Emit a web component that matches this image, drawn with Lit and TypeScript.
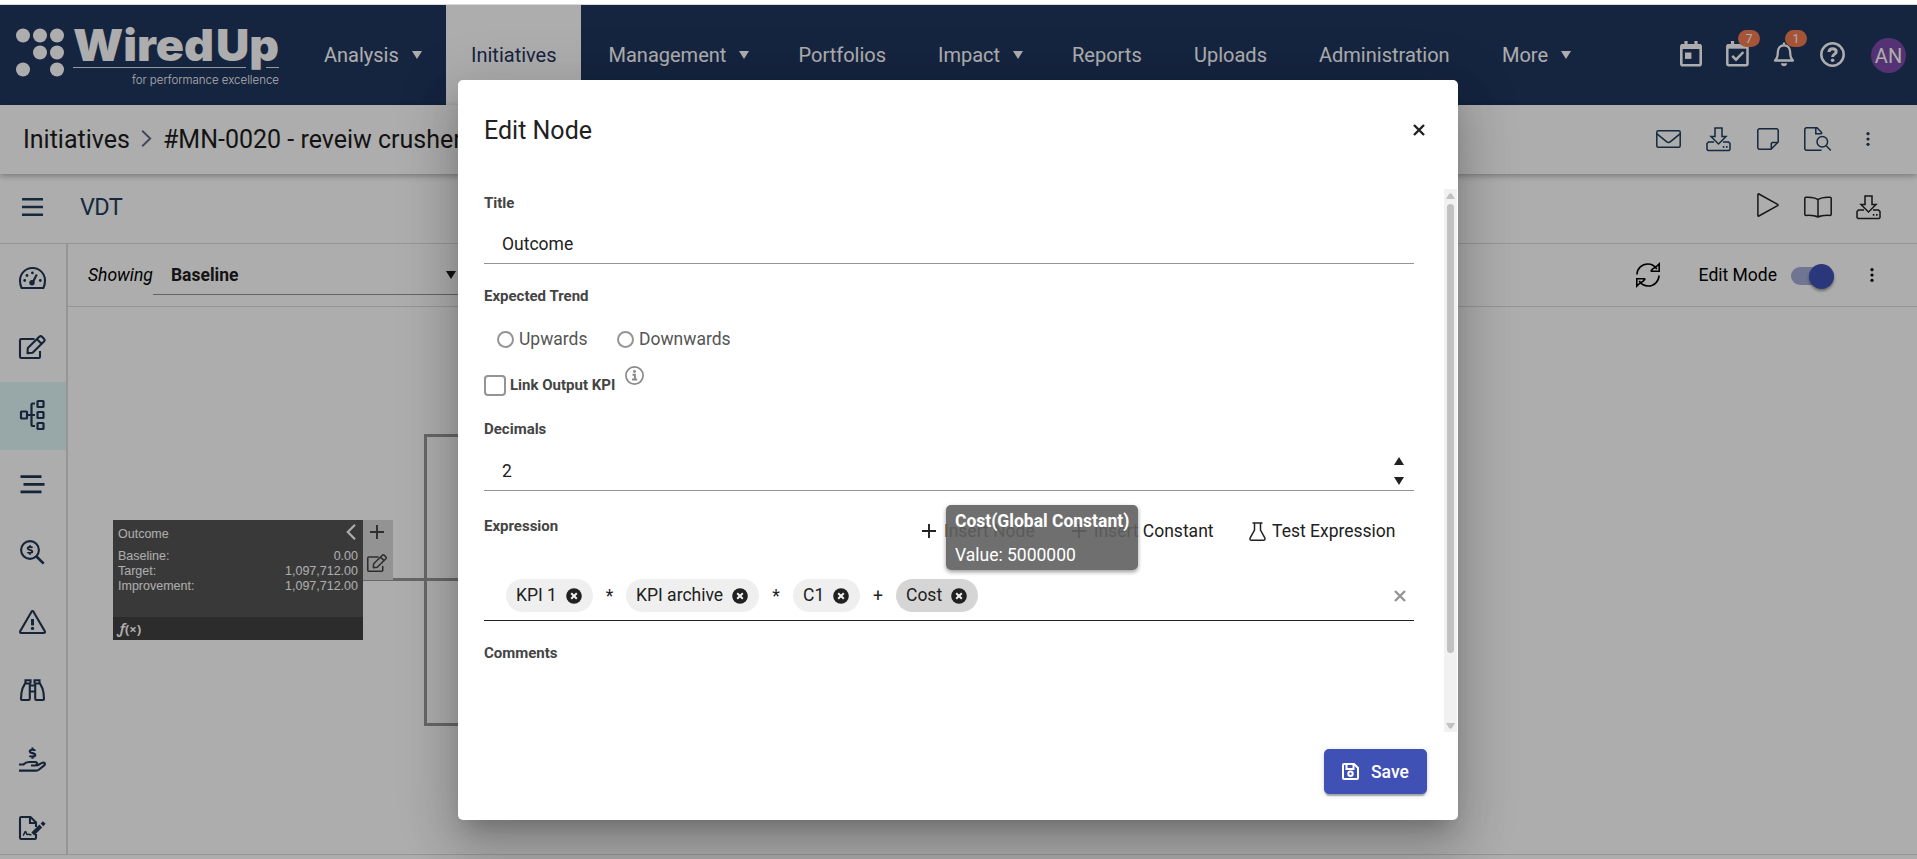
import { LitElement, html, css, svg } from "lit";
import { customElement, property } from "lit/decorators.js";

type Glyph = { w: number; h: number; s?: number; body: unknown };

const dollar = (x: number, y: number, k: number) =>
  svg`<g transform="translate(${x} ${y}) scale(${k})"><path d="M2.6-2.4C2-3.6-2.6-3.8-2.6-1.7C-2.6.2 2.6-.3 2.6 1.8C2.6 3.8-2.2 3.6-2.8 2.3M0-5.4V-3.2M0 3.3V5.4"/></g>`;

const download = svg`<path d="M9 1H16V9.5H20L12.5 17L5 9.5H9Z"/><path d="M8 15H2.5L1 16.5V22.5L2 23.5H23L24 22.5V16.5L22.5 15H17"/><path d="M16.8 19.8H18.4M20 19.8H21.6" stroke-width="1.8"/>`;

const ICONS: Record<string, Glyph> = {
  calendar: { w: 22, h: 26, s: 2.6, body: svg`<rect x="1.3" y="4.3" width="19.4" height="20" rx="1.5"/><path d="M1 5.5H21" stroke-width="5"/><path d="M6 0V5M16 0V5" stroke-width="3.2"/><rect x="5" y="11.5" width="6.4" height="6.4" fill="currentColor" stroke="none"/>` },
  tasks: { w: 23, h: 26, s: 2.5, body: svg`<rect x="1.3" y="4.3" width="20.2" height="20" rx="1.5"/><path d="M1 5.5H22" stroke-width="4.4"/><path d="M6.5 0V5M16.5 0V5" stroke-width="3.2"/><path d="M6.2 14.8L10 18.6L17.4 11"/>` },
  bell: { w: 22, h: 26, s: 2.3, body: svg`<path d="M2 19.5H20C17.3 17 17.2 14.5 17.2 11.5C17.2 7 14.7 4.3 11 4.3S4.8 7 4.8 11.5C4.8 14.5 4.7 17 2 19.5Z" stroke-linejoin="round"/><path d="M11 1.5V4"/><path d="M7.8 22.3H14.2C14 24.3 12.7 25.3 11 25.3S8 24.3 7.8 22.3Z" fill="currentColor" stroke="none"/>` },
  help: { w: 25, h: 25, s: 2.5, body: svg`<circle cx="12.5" cy="12.5" r="11.2"/><path d="M8.9 10C9.1 7.6 10.7 6.7 12.6 6.7C14.7 6.7 16.2 7.9 16.2 9.7C16.2 12.2 12.6 12.1 12.6 15" stroke-width="3"/><circle cx="12.6" cy="18.3" r="1.8" fill="currentColor" stroke="none"/>` },
  mail: { w: 25, h: 18, s: 1.5, body: svg`<rect x=".8" y=".8" width="23.4" height="16.4" rx="1.5"/><path d="M1 3.8L10.5 11.6Q12.5 13.2 14.5 11.6L24 3.8"/>` },
  download: { w: 25, h: 24, s: 1.5, body: download },
  note: { w: 22, h: 22, s: 1.5, body: svg`<path d="M2 .8H20L21.2 2V14L14 21.2H2L.8 20V2Z" stroke-linejoin="round"/><path d="M21 14.4H15.4L14.3 15.4V21"/>` },
  fileSearch: { w: 28, h: 24, s: 1.5, body: svg`<path d="M17.6 7V5.6L13 .8H2L.8 2V22L2 23.2H17.5"/><path d="M11.8 1V6.8H17.6"/><circle cx="18.3" cy="14.8" r="5.3"/><path d="M22.2 18.8L26.8 23.5"/>` },
  dots: { w: 4, h: 14, body: svg`<g fill="currentColor" stroke="none"><circle cx="2" cy="1.700" r="1.600"/><circle cx="2" cy="7" r="1.600"/><circle cx="2" cy="12.300" r="1.600"/></g>` },
  play: { w: 22, h: 24, s: 1.5, body: svg`<path d="M.9 1.4V22.6Q1 23.4 1.9 23L20.6 12.6Q21.4 12 20.6 11.4L1.9 1Q1 .6 .9 1.4Z"/>` },
  book: { w: 28, h: 22, s: 1.5, body: svg`<path d="M14 3.6C11 1.4 6.5 1 2 1.2Q.8 1.3 .8 2.5V18.3Q.8 19.4 2 19.4C6.500 19.200 11 19.500 14 21C17 19.500 21.500 19.200 26 19.400Q27.200 19.400 27.200 18.300V2.500Q27.200 1.300 26 1.200C21.500 1 17 1.400 14 3.600ZM14 3.600V21"/>` },
  refresh: { w: 24, h: 24, s: 1.6, body: svg`<path d="M.9 11.500C1.300 5.300 6 1 11.800 1C15.500 1 18.800 3 20.800 6"/><path d="M15.200 7.800L16.500 6.200L21.500 2.600L23.200 .9V8.200H15.400Z"/><path d="M23.100 12.500C22.700 18.700 18 23 12.200 23C8.500 23 5.200 21 3.200 18"/><path d="M8.800 16.200L7.500 17.800L2.500 21.400L.8 23.100V15.800H8.600Z"/>` },
  menu: { w: 21, h: 18, s: 2.6, body: svg`<path d="M0 1.300H21M0 9H21M0 16.700H21"/>` },
  gauge: { w: 27, h: 22, s: 2.100, body: svg`<path d="M2.600 21H24.400C25.400 19 26 16.500 26 13.500C26 6.500 20.400 1 13.500 1S1 6.500 1 13.500C1 16.500 1.600 19 2.600 21Z" stroke-linejoin="round"/><path d="M13.600 15.400L17.800 7.600" stroke-width="2.200"/><g fill="currentColor" stroke="none"><circle cx="13" cy="15.800" r="2.700"/><circle cx="5.700" cy="13.500" r="1.400"/><circle cx="21.300" cy="13.500" r="1.400"/><circle cx="8" cy="8.500" r="1.400"/><circle cx="13.400" cy="5.900" r="1.400"/></g>` },
  edit: { w: 27, h: 24, s: 2.100, body: svg`<path d="M15.500 4H2.200Q1 4 1 5.200V21.800Q1 23 2.200 23H19.800Q21 23 21 21.800V16"/><path d="M8.800 13L20.500 1.600Q21.800 .6 23 1.700L25.200 3.900Q26.300 5.100 25.200 6.300L13.600 17.700L8.500 18.200ZM18 4.200L22.700 8.900" stroke-linejoin="round"/>` },
  tree: { w: 25, h: 30, s: 2.200, body: svg`<rect x="1" y="11.500" width="6" height="7" rx=".6"/><rect x="17.500" y="1" width="6" height="6" rx=".6"/><rect x="17.500" y="12" width="6" height="6" rx=".6"/><rect x="17.500" y="23" width="6" height="6" rx=".6"/><path d="M7 15H15M15 3.500H12.500Q11.500 3.500 11.500 4.500V25Q11.500 26 12.500 26H15"/>` },
  lines: { w: 25, h: 19, s: 2.8, body: svg`<path d="M.5 1.600H21.500M3.500 9.300H24.500M.5 16.900H21.500"/>` },
  searchDollar: { w: 25, h: 25, s: 2.1, body: svg`<circle cx="10" cy="10" r="8.900"/><path d="M16.500 16.500L23.700 23.700" stroke-width="2.600"/>${dollar(10, 10, 0.9)}` },
  warning: { w: 27, h: 24, s: 2.100, body: svg`<path d="M12.500 1.700Q13.500 .2 14.500 1.700L25.800 21.200Q26.400 22.900 24.800 23H2.200Q.6 22.900 1.200 21.200Z"/><path d="M13.500 9V15.400" stroke-width="3"/><circle cx="13.500" cy="18.400" r="1.700" fill="currentColor" stroke="none"/>` },
  binoculars: { w: 25, h: 22, s: 2.100, body: svg`<path d="M10 4.500H5L2.500 9.500Q1 14 1 20Q1 21 2 21H8.500Q9.800 21 9.800 19.800V4.500M15 4.500H20L22.500 9.500Q24 14 24 20Q24 21 23 21H16.500Q15.200 21 15.200 19.800V4.500M5.500 4V1.300H10.500V4.500M19.500 4V1.300H14.500V4.500M10 6.500H15M10 12.500H15"/>` },
  hand: { w: 27, h: 25, s: 2.100, body: svg`<path d="M0 17.500H4.500C6.500 15.300 8 15 10 15H16C18.800 15 18.800 18.200 16 18.500H12M17.500 18.500C20.500 18 22 15.500 24.300 15.500C26.300 15.700 26.300 17.400 25.200 18.400L19.800 22.800Q18.800 23.600 17.300 23.600H0"/>${dollar(13.500, 6.200, 1.050)}` },
  fileSign: { w: 27, h: 24, s: 2.100, body: svg`<path d="M17 18V21.800Q17 23 15.800 23H2.200Q1 23 1 21.800V2.200Q1 1 2.200 1H11.500L17 6.500V11"/><path d="M11 1.500V7H16.500"/><path d="M4 19.500C5.200 19 5.500 15.500 6.500 15.500S7 19 8.500 18.500S10 18.500 12.500 18.800" stroke-width="1.500"/><path d="M13.800 18L21.800 10" stroke-width="4"/><path d="M22.900 8.900L25.300 6.500" stroke-width="3.800"/>` },
  plus: { w: 14, h: 14, s: 1.900, body: svg`<path d="M7 0V14M0 7H14"/>` },
  flask: { w: 17, h: 19, s: 1.500, body: svg`<path d="M3.500 .9H13.500M5.500 1V8L1.200 15.800C.6 17.200 1.200 18.200 2.600 18.200H14.400C15.800 18.200 16.400 17.200 15.800 15.800L11.500 8V1"/>` },
  info: { w: 19, h: 19, s: 1.700, body: svg`<circle cx="9.500" cy="9.500" r="8.600"/><circle cx="9.500" cy="5.500" r="1.400" fill="currentColor" stroke="none"/><path d="M7.500 8.700H9.900V13M7 13.600H12.200" stroke-width="2"/>` },
  remove: { w: 16, h: 16, s: 2, body: svg`<circle cx="8" cy="8" r="7.800" fill="currentColor" stroke="none"/><path d="M5.200 5.200L10.800 10.800M10.800 5.200L5.200 10.800" stroke="#f2f2f2"/>` },
  close: { w: 12, h: 12, s: 2.400, body: svg`<path d="M1 1L11 11M11 1L1 11"/>` },
  chevronLeft: { w: 10, h: 16, s: 2.200, body: svg`<path d="M9 .8L1.800 8L9 15.200"/>` },
  chevronRight: { w: 11, h: 17, s: 1.900, body: svg`<path d="M1.200 .8L9.200 8.500L1.200 16.200"/>` },
  save: { w: 17, h: 17, s: 2, body: svg`<path d="M2 1H12L16 5V15Q16 16 15 16H2Q1 16 1 15V2Q1 1 2 1Z"/><path d="M4.500 1V6H11.500V1.500"/><circle cx="8.500" cy="10.800" r="2.200"/>` },
  down: { w: 10, h: 8, body: svg`<path d="M0 0H10L5 8Z" fill="currentColor" stroke="none"/>` },
  up: { w: 10, h: 8, body: svg`<path d="M0 8H10L5 0Z" fill="currentColor" stroke="none"/>` },
  scrollUp: { w: 9, h: 6, body: svg`<path d="M0 6H9L6 1Q4.500 -.5 3 1Z" fill="currentColor" stroke="none"/>` },
  scrollDown: { w: 9, h: 6, body: svg`<path d="M0 0H9L6 5Q4.500 6.500 3 5Z" fill="currentColor" stroke="none"/>` },
};

@customElement("ui-icon")
export class UiIcon extends LitElement {
  @property() name = "";
  static styles = css`
    :host { display: inline-flex; flex: none; }
    svg { display: block; overflow: visible; }
  `;
  render() {
    const g = ICONS[this.name];
    return html`<svg width=${g.w} height=${g.h} viewBox="0 0 ${g.w} ${g.h}" fill="none" stroke="currentColor" stroke-width=${g.s ?? 1.5}>${g.body}</svg>`;
  }
}

@customElement("wired-logo")
export class WiredLogo extends LitElement {
  static styles = css`
    :host { display: block; width: 268px; height: 70px; color: #fff; }
    svg { display: block; overflow: visible; }
    .word { font: 900 44px "Inter", sans-serif; }
    .tag { font: 300 12px "Inter", sans-serif; }
  `;
  render() {
    const dots = [[7, 15.500], [24, 15.500], [41, 15.500], [24, 32.500], [41, 32.500], [7, 49.500], [41, 49.500]];
    return html`<svg width="268" height="70" fill="#fff">
      ${dots.map(([x, y]) => svg`<circle cx=${x} cy=${y} r="7"/>`)}
      <text class="word" x="57" y="41" textLength="141" lengthAdjust="spacingAndGlyphs">Wired</text>
      <text class="word" x="200" y="41" textLength="63" lengthAdjust="spacingAndGlyphs">Up</text>
      <path d="M57 47.500H230M250 47.500H263" stroke="#fff" stroke-width="1" opacity=".85"/>
      <text class="tag" x="116" y="64" textLength="147" lengthAdjust="spacingAndGlyphs">for performance excellence</text>
    </svg>`;
  }
}

@customElement("top-bar")
export class TopBar extends LitElement {
  static styles = css`
    :host { display: flex; height: 100px; background: #1f355e; color: #fff; font-size: 20px; }
    wired-logo { margin: 15px 0 0 16px; }
    .logo { width: 299px; }
    nav { display: grid; grid-template-columns: 147px 137.500px 190px 139.500px 134px 122px 125px 183px 120px; }
    .item { display: flex; align-items: center; padding-left: 25px; gap: 13px; }
    .active { width: 110px; background: #fff; color: #1f355e; }
    .tools { margin-left: auto; display: flex; align-items: center; padding-right: 11px; }
    .tool { position: relative; display: flex; width: 47px; margin: -2px 1px 0 -1px; }
    .tool:first-child { width: 46px; }
    .badge { position: absolute; left: 12px; top: -11px; width: 22px; height: 17px; border-radius: 9px; background: #f47c51; font-size: 12.500px; line-height: 17px; text-align: center; }
    .avatar { width: 35px; height: 35px; margin: 1px 0 0 3px; border-radius: 50%; background: #7c4bab; display: flex; align-items: center; justify-content: center; font-size: 20px; }
  `;
  render() {
    const items: [string, boolean][] = [["Analysis", true], ["Initiatives", false], ["Management", true], ["Portfolios", false], ["Impact", true], ["Reports", false], ["Uploads", false], ["Administration", false], ["More", true]];
    return html`
      <div class="logo"><wired-logo></wired-logo></div>
      <nav>${items.map(([t, m]) => html`<div class="item ${t === "Initiatives" ? "active" : ""}"><span>${t}</span>${m ? html`<ui-icon name="down"></ui-icon>` : ""}</div>`)}</nav>
      <div class="tools">
        <div class="tool"><ui-icon name="calendar"></ui-icon></div>
        <div class="tool"><ui-icon name="tasks"></ui-icon><span class="badge">7</span></div>
        <div class="tool"><ui-icon name="bell"></ui-icon><span class="badge">1</span></div>
        <div class="tool"><ui-icon name="help"></ui-icon></div>
        <div class="avatar">AN</div>
      </div>`;
  }
}

@customElement("vdt-node")
export class VdtNode extends LitElement {
  static styles = css`
    :host { display: flex; align-items: flex-start; font: 12.500px/15px "Liberation Sans", Arial, sans-serif; }
    .card { width: 250px; height: 120px; background: #555; color: #fff; display: flex; flex-direction: column; }
    .head { display: flex; justify-content: space-between; padding: 4px 7px 0 5px; height: 25px; }
    .head span { padding-top: 3px; }
    .rows { flex: 1; }
    .row { display: flex; justify-content: space-between; padding: 0 5px; }
    .foot { height: 23px; background: #414141; padding-left: 5px; font: 700 13px/22px "Noto Sans", sans-serif; box-sizing: border-box; }
    .foot i { font-size: 15px; font-weight: 600; }
    .side { width: 30px; height: 60px; background: #d9d9d9; color: #444; display: flex; flex-direction: column; align-items: center; }
    .side ui-icon:first-child { margin: 5px 2px 0 0; }
    .pencil { zoom: .75; margin: 20px 2px 0 0; }
  `;
  render() {
    const rows = [["Baseline:", "0.00"], ["Target:", "1,097,712.00"], ["Improvement:", "1,097,712.00"]];
    return html`
      <div class="card">
        <div class="head"><span>Outcome</span><ui-icon name="chevronLeft"></ui-icon></div>
        <div class="rows">${rows.map(([a, b]) => html`<div class="row"><span>${a}</span><span>${b}</span></div>`)}</div>
        <div class="foot"><i>ƒ</i>(×)</div>
      </div>
      <div class="side"><ui-icon name="plus"></ui-icon><ui-icon class="pencil" name="edit"></ui-icon></div>`;
  }
}

@customElement("edit-dialog")
export class EditDialog extends LitElement {
  static styles = css`
    :host { display: flex; flex-direction: column; width: 1000px; height: 740px; background: #fff; border-radius: 5px; color: #212121; font-size: 17.500px; box-shadow: 0 14px 19px -9px rgba(0,0,0,.2), 0 30px 48px 4px rgba(0,0,0,.14), 0 11px 58px 10px rgba(0,0,0,.12); }
    .head { display: flex; justify-content: space-between; align-items: center; height: 100px; padding: 0 33px 0 26px; margin-bottom: 9px; font-size: 25px; }
    .body { flex: 1; display: flex; overflow: hidden; }
    .form { width: 930px; margin: -1px 0 0 26px; display: flex; flex-direction: column; }
    .label { height: 30px; line-height: 30px; font-size: 15px; font-weight: 700; color: #444; }
    .field { height: 39px; margin-top: 6px; border-bottom: 1px solid #949494; display: flex; align-items: center; padding: 0 11px 0 18px; justify-content: space-between; }
    .gap { margin-top: 17px; }
    .radios { display: flex; align-items: center; height: 57px; padding: 0 0 1px 13px; color: #555; box-sizing: border-box; }
    .radio { display: flex; align-items: center; width: 120px; gap: 5px; }
    .dot { width: 17px; height: 17px; margin-top: 1px; border: 2px solid #949494; border-radius: 50%; box-sizing: border-box; }
    .check { display: flex; height: 33px; align-items: center; font-size: 15px; font-weight: 700; color: #444; }
    .box { width: 22px; height: 21px; box-sizing: border-box; border: 2px solid #949494; border-radius: 4px; margin: 1px 4px 0 0; }
    .info { color: #8a8a8a; margin: -18px 0 0 10px; }
    .dec { margin-top: 13px; }
    .num { margin-top: 7px; }
    .spin { display: flex; flex-direction: column; gap: 12px; margin-right: -1px; }
    .expr { display: flex; height: 80px; align-items: center; }
    .expr .label { padding-bottom: 10px; margin-right: auto; }
    .action { display: flex; align-items: center; gap: 8px; margin-right: 37px; }
    .action.c { margin-right: 35.500px; }
    .action:last-child { margin-right: 18.500px; gap: 6px; }
    .chips { height: 49px; border-bottom: 1px solid #212121; display: flex; align-items: center; padding: 0 8px 0 22px; }
    .chip { height: 33px; border-radius: 17px; background: #efefef; display: flex; align-items: center; padding: 0 11px 0 10px; box-sizing: border-box; justify-content: space-between; }
    .chip span { padding-bottom: 1px; }
    .chip.on { background: #d5d5d5; }
    .k1 { width: 87px; } .k2 { width: 133px; } .k3 { width: 67px; } .k4 { width: 82px; }
    .op { width: 33px; text-align: center; }
    .op.m { width: 34px; }
    .op.p { width: 36px; }
    .clear { margin-left: auto; color: #949494; }
    .bar { margin-left: auto; width: 13px; margin-right: 1px; background: #f1f1f1; display: flex; flex-direction: column; align-items: center; color: #c1c1c1; padding: 4px 0 3px; box-sizing: border-box; }
    .thumb { width: 7px; height: 449px; margin: 5px 0 auto; border-radius: 4px; background: #c1c1c1; }
    .foot { height: 88px; display: flex; justify-content: flex-end; padding: 17px 31px 0 0; box-sizing: border-box; }
    .save { width: 103px; height: 45px; border-radius: 5px; background: #3f51b5; color: #fff; font-weight: 500; display: flex; align-items: center; padding-left: 18px; gap: 12px; box-sizing: border-box; box-shadow: 0 4px 1px -2px rgba(0,0,0,.2), 0 2px 2px rgba(0,0,0,.14), 0 1px 6px rgba(0,0,0,.12); }
  `;
  render() {
    const chip = (t: string, c: string) => html`<div class="chip ${c}"><span>${t}</span><ui-icon name="remove"></ui-icon></div>`;
    return html`
      <div class="head"><span>Edit Node</span><ui-icon name="close"></ui-icon></div>
      <div class="body">
        <div class="form">
          <div class="label">Title</div>
          <div class="field">Outcome</div>
          <div class="label gap">Expected Trend</div>
          <div class="radios">
            <div class="radio"><span class="dot"></span>Upwards</div>
            <div class="radio"><span class="dot"></span>Downwards</div>
          </div>
          <div class="check"><span class="box"></span>Link Output KPI<ui-icon class="info" name="info"></ui-icon></div>
          <div class="label dec">Decimals</div>
          <div class="field num">2<div class="spin"><ui-icon name="up"></ui-icon><ui-icon name="down"></ui-icon></div></div>
          <div class="expr">
            <div class="label">Expression</div>
            <div class="action"><ui-icon name="plus"></ui-icon>Insert Node</div>
            <div class="action c"><ui-icon name="plus"></ui-icon>Insert Constant</div>
            <div class="action"><ui-icon name="flask"></ui-icon>Test Expression</div>
          </div>
          <div class="chips">
            ${chip("KPI 1", "k1")}<span class="op">*</span>${chip("KPI archive", "k2")}<span class="op m">*</span>${chip("C1", "k3")}<span class="op p">+</span>${chip("Cost", "k4 on")}
            <ui-icon class="clear" name="close"></ui-icon>
          </div>
          <div class="label gap">Comments</div>
        </div>
        <div class="bar"><ui-icon name="scrollUp"></ui-icon><div class="thumb"></div><ui-icon name="scrollDown"></ui-icon></div>
      </div>
      <div class="foot"><div class="save"><ui-icon name="save"></ui-icon>Save</div></div>`;
  }
}

@customElement("app-root")
export class AppRoot extends LitElement {
  static styles = css`
    :host { display: flex; flex-direction: column; height: 859px; overflow: hidden; font-family: "Roboto", sans-serif; background: #fff; color: #000; }
    .strip { height: 4px; border-bottom: 1px solid #dadada; }
    .page { position: relative; flex: 1; display: flex; flex-direction: column; min-height: 0; }
    .crumbs { height: 69px; display: flex; align-items: center; padding: 0 47px 0 23px; font-size: 25px; color: #1c1c1c; box-shadow: 0 2px 6px rgba(0,0,0,.3); z-index: 1; }
    .crumbs .sep { margin: -2px 11px 0 11px; color: #5c6b80; }
    .tools { margin-left: auto; display: flex; align-items: center; color: #1f3d5e; margin-top: -1px; }
    .title { height: 69px; border-bottom: 1px solid #dcdcdc; display: flex; align-items: center; padding: 0 36px 0 22px; color: #1f3d5e; font-size: 25px; box-sizing: content-box; }
    .vdt { margin-left: 37px; font-size: 23.500px; font-weight: 400; letter-spacing: -.6px; padding-bottom: 4px; }
    .title ui-icon:first-child { margin-bottom: 3px; }
    .title .tools { color: #222; margin-bottom: 3px; }
    .main { flex: 1; display: flex; border-bottom: 1px solid #dcdcdc; min-height: 0; }
    .bottom { height: 4px; }
    aside { width: 66px; border-right: 2px solid #dcdcdc; display: flex; flex-direction: column; color: #1f3654; overflow: hidden; }
    .side { flex: none; height: 68.750px; display: flex; align-items: center; justify-content: center; padding: 0 1px 1px 0; box-sizing: border-box; }
    .on { background: #e0f7f6; }
    .content { flex: 1; display: flex; flex-direction: column; }
    .filter { height: 62px; border-bottom: 1px solid #dcdcdc; display: flex; align-items: center; padding: 0 43px 0 20px; font-size: 17.500px; }
    .filter i { padding-bottom: 1px; }
    .select { width: 320px; height: 38px; border-bottom: 1px solid #949494; display: flex; align-items: center; justify-content: space-between; font-weight: 700; color: #1c1c1c; padding: 0 17px 0 18px; box-sizing: border-box; margin-top: 1px; }
    .mode { margin-left: auto; display: flex; align-items: center; margin-top: -1px; }
    .mode span { margin: 0 14px 0 39px; }
    .track { width: 43px; height: 18px; border-radius: 9px; background: #a6add8; display: flex; align-items: center; justify-content: flex-end; margin: 3px 36px 0 0; box-sizing: border-box; }
    .knob { width: 25px; height: 25px; flex: none; border-radius: 50%; background: #3f51b5; box-shadow: 0 2px 3px rgba(0,0,0,.4); }
    .canvas { position: relative; flex: 1; overflow: hidden; }
    .wire { position: absolute; box-sizing: border-box; border: 3px solid #999; }
    .loop { left: 356px; top: 127px; width: 200px; height: 292px; }
    .line { left: 295px; top: 271px; width: 200px; height: 3px; border-width: 3px 0 0; }
    vdt-node { position: absolute; left: 45px; top: 213px; }
    .overlay { position: absolute; inset: 0; background: rgba(0,0,0,.32); display: flex; justify-content: center; align-items: flex-start; padding: 75px 1px 0 0; z-index: 5; overflow: hidden; }
    .tip { position: absolute; left: 946px; top: 500px; width: 192px; height: 65px; box-sizing: border-box; border-radius: 5px; background: rgba(97,97,97,.91); color: #fff; font-size: 17.500px; padding: 0 9px; line-height: 34px; box-shadow: 0 2px 4px rgba(0,0,0,.4); z-index: 6; white-space: nowrap; }
    .tip div { height: 32.500px; }
    .tip b { display: block; height: 32.500px; line-height: 32.500px; }
    .w1 { margin-right: 25px; } .w2 { margin-right: 26px; } .w3 { margin-right: 25px; } .w4 { margin-right: 34px; }
    .w5 { margin-right: 25px; } .w6 { margin-right: 24px; }
  `;
  render() {
    const side = ["gauge", "edit", "tree", "lines", "searchDollar", "warning", "binoculars", "hand", "fileSign"];
    return html`
      <div class="strip"></div>
      <div class="page">
        <top-bar></top-bar>
        <div class="crumbs">
          <span>Initiatives</span><ui-icon class="sep" name="chevronRight"></ui-icon><span>#MN-0020 - reveiw crusher</span>
          <div class="tools">
            <ui-icon class="w1" name="mail"></ui-icon><ui-icon class="w2" name="download"></ui-icon><ui-icon class="w3" name="note"></ui-icon><ui-icon class="w4" name="fileSearch"></ui-icon><ui-icon name="dots"></ui-icon>
          </div>
        </div>
        <div class="title">
          <ui-icon name="menu"></ui-icon><span class="vdt">VDT</span>
          <div class="tools"><ui-icon class="w5" name="play"></ui-icon><ui-icon class="w6" name="book"></ui-icon><ui-icon name="download"></ui-icon></div>
        </div>
        <div class="main">
          <aside>${side.map((n) => html`<div class="side ${n === "tree" ? "on" : ""}"><ui-icon name=${n}></ui-icon></div>`)}</aside>
          <div class="content">
            <div class="filter">
              <i>Showing</i><div class="select">Baseline<ui-icon name="down"></ui-icon></div>
              <div class="mode"><ui-icon name="refresh"></ui-icon><span>Edit Mode</span><div class="track"><div class="knob"></div></div><ui-icon name="dots"></ui-icon></div>
            </div>
            <div class="canvas"><div class="wire loop"></div><div class="wire line"></div><vdt-node></vdt-node></div>
          </div>
        </div>
        <div class="bottom"></div>
        <div class="overlay"><edit-dialog></edit-dialog></div>
        <div class="tip"><b>Cost(Global Constant)</b><div>Value: 5000000</div></div>
      </div>`;
  }
}
